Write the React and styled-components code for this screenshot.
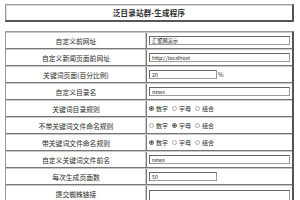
import React from 'react'
import styled, { createGlobalStyle } from 'styled-components'

const Global = createGlobalStyle`
  html, body { margin: 0; padding: 0; background: #fff; }
  body {
    font-family: "Noto Sans CJK SC", "Noto Sans", sans-serif;
    color: #2a2a2a;
  }
`

const Page = styled.div`
  width: 300px;
  height: 200px;
  overflow: hidden;
  padding: 4px 6px 0 5px;
  box-sizing: border-box;
`

const TitleBox = styled.div`
  height: 18px;
  box-sizing: border-box;
  border: 1px solid #9a9a9a;
  border-right: 2px solid #555;
  border-bottom: 2px solid #555;
  box-shadow: inset 1px 1px 0 #ddd;
  display: flex;
  align-items: center;
  justify-content: center;
  font-size: 7.5px;
  font-weight: 700;
  letter-spacing: 0.2px;
`

const Form = styled.div`
  margin-top: 9px;
  border: 1px solid #9a9a9a;
  border-right: 2px solid #555;
  border-bottom: 0;
`

const Row = styled.div`
  display: grid;
  grid-template-columns: 141px 1fr;
  height: 17px;
  box-sizing: border-box;
  border-top: 1px solid #c8c8c8;
  border-bottom: 1px solid #777;
`

const Label = styled.div`
  display: flex;
  align-items: center;
  justify-content: center;
  font-size: 6.8px;
  border-right: 1px solid #777;
  box-shadow: inset -1px 0 0 #ccc;
`

const Value = styled.div`
  display: flex;
  align-items: ${p => (p.$top ? 'flex-end' : 'center')};
  padding-left: 2px;
  padding-right: 2px;
  font-size: 6px;
  gap: 1px;
`

const Input = styled.div`
  height: 9px;
  width: ${p => (p.$short ? '68px' : '100%')};
  box-sizing: border-box;
  border: 1px solid #999;
  border-top-color: #666;
  border-left-color: #666;
  background: #fff;
  font-size: 5.2px;
  line-height: 7px;
  padding-left: 2px;
  white-space: nowrap;
  overflow: hidden;
`

const Area = styled(Input)`
  height: 12px;
  margin-bottom: -1px;
  border-bottom: 0;
`

const Radios = styled.div`
  display: flex;
  align-items: center;
  gap: 4px;
  font-size: 6px;
`

const Opt = styled.span`
  display: flex;
  align-items: center;
  gap: 2px;
`

const Dot = styled.span`
  width: 5px;
  height: 5px;
  border-radius: 50%;
  box-sizing: border-box;
  border: 1px solid ${p => (p.$on ? '#555' : '#aaa')};
  background: ${p => (p.$on ? 'radial-gradient(circle, #222 40%, #fff 55%)' : '#fff')};
`

const options = ['数字', '字母', '组合']

const RadioGroup = ({ checked }) => (
  <Radios>
    {options.map((o, i) => (
      <Opt key={o}>
        <Dot $on={i === checked} />
        {o}
      </Opt>
    ))}
  </Radios>
)

const rows = [
  { label: '自定义前网址', value: <Input>汇聚网演示</Input> },
  { label: '自定义新闻页面前网址', value: <Input>http://localhost</Input> },
  { label: '关键词页面(百分比例)', value: <><Input $short>20</Input><span>%</span></> },
  { label: '自定义目录名', value: <Input>news</Input> },
  { label: '关键词目录规则', value: <RadioGroup checked={0} /> },
  { label: '不带关键词文件命名规则', value: <RadioGroup checked={1} /> },
  { label: '带关键词文件命名规则', value: <RadioGroup checked={0} /> },
  { label: '自定义关键词文件前名', value: <Input>news</Input> },
  { label: '每次生成页面数', value: <Input $short>50</Input> },
  { label: '提交蜘蛛链接', value: <Area />, top: true },
]

export default function App() {
  return (
    <Page>
      <Global />
      <TitleBox>泛目录站群-生成程序</TitleBox>
      <Form>
        {rows.map(r => (
          <Row key={r.label}>
            <Label>{r.label}</Label>
            <Value $top={r.top}>{r.value}</Value>
          </Row>
        ))}
      </Form>
    </Page>
  )
}
